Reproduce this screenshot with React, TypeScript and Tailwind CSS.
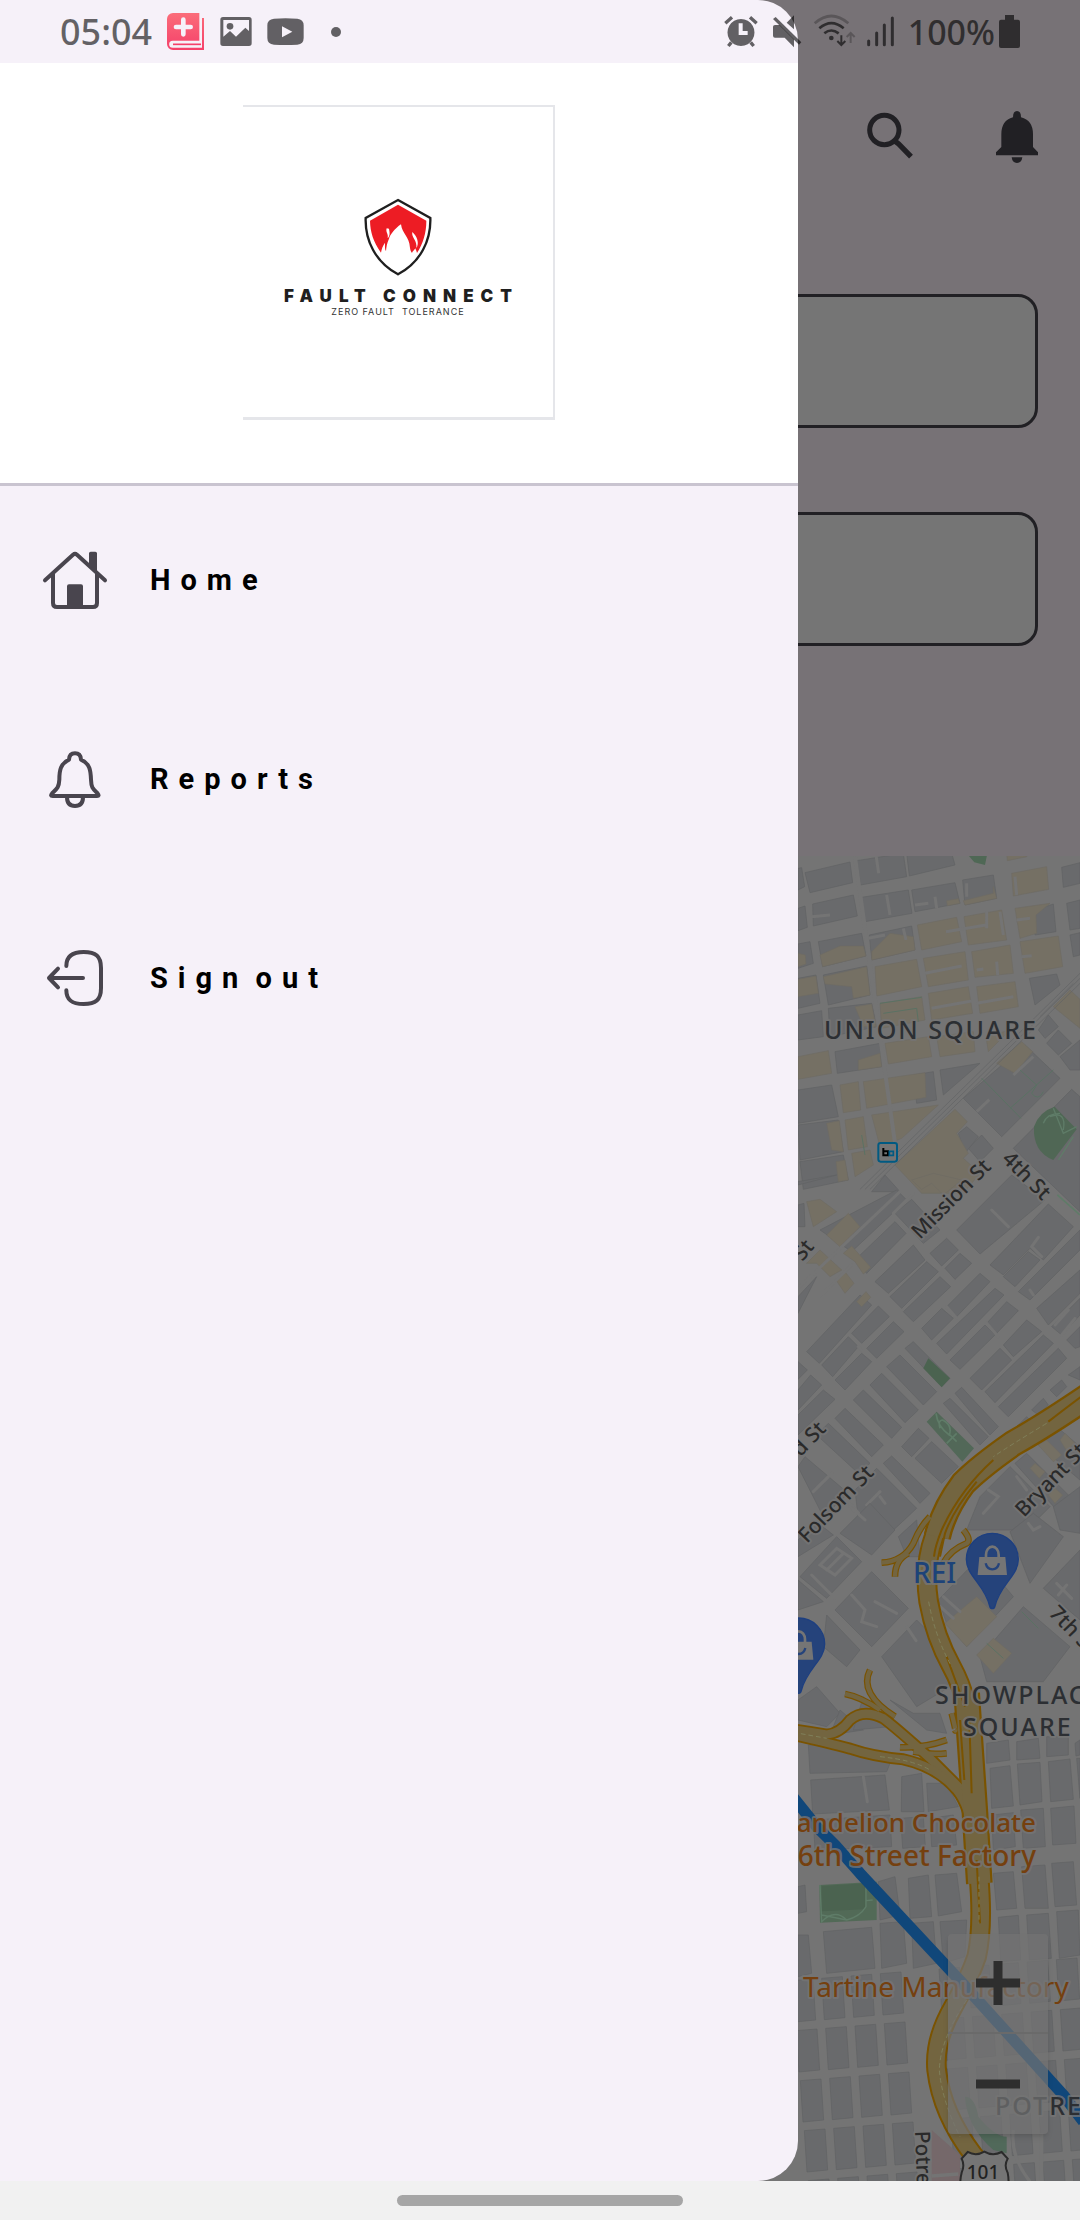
import React from "react";

/* ---------- Status bar ---------- */

function StatusBar() {
  return (
    <div className="absolute inset-x-0 top-0 flex h-[63px] items-center pr-[60px] pl-[60px] text-black/60">
      <span className="font-['Noto_Sans',sans-serif] text-[36px] leading-none font-medium">05:04</span>
      <svg className="ml-[15px] h-[37px] w-[37px]" viewBox="501 39 111 111" aria-hidden="true">
        <defs>
          <linearGradient id="book" x1="0" y1="0" x2="0" y2="1">
            <stop offset="0" stopColor="#fb6d7a" />
            <stop offset="1" stopColor="#f5406a" />
          </linearGradient>
        </defs>
        <path
          fill="url(#book)"
          d="M519 39h79v83h-80a10.500 10.500 0 0 0 0 21h88V54h6v96H519a18 18 0 0 1-18-18V57a18 18 0 0 1 18-18z"
        />
        <path stroke="#f5406a" strokeWidth="5" d="M519 133h84" />
        <path stroke="#f6f1f9" strokeWidth="14" strokeLinecap="round" d="M550 59v44M528 81h44" />
      </svg>
      <svg className="ml-4 h-[29px] w-[32px] fill-current" viewBox="660 51 96 87" aria-hidden="true">
        <path
          fillRule="evenodd"
          d="M669 51h78a8 8 0 0 1 8 8v71a8 8 0 0 1-8 8h-78a8 8 0 0 1-8-8V59a8 8 0 0 1 8-8zM670 60v50l20-17 18 17 28-27 11 10V60z"
        />
        <circle cx="690" cy="79" r="10" />
      </svg>
      <svg className="ml-[15px] h-[27px] w-[37px] fill-current" viewBox="801 54 111 81" aria-hidden="true">
        <path
          fillRule="evenodd"
          d="M822 56q34-3 70 0 19 2 19 20v38q0 18-19 20-36 2-70 0-20-2-20-20V76q0-18 20-20zM846 79v33l31-17z"
        />
      </svg>
      <span className="ml-[27px] h-[10px] w-[10px] rounded-full bg-current" />

      <svg className="ml-auto h-[33px] w-[34px]" viewBox="132 45 102 99" aria-hidden="true">
        <path
          fill="currentColor"
          fillRule="evenodd"
          d="M183 57a40.500 40.500 0 1 1-.1 0zM176 70v35h27V93h-15V70z"
        />
        <path stroke="currentColor" strokeWidth="10" d="M136 70l20-18M230 70l-20-18M154 127l-9 11M212 127l9 11" />
      </svg>
      <svg className="ml-[14px] h-[33px] w-[30px] fill-current" viewBox="276 45 90 99" aria-hidden="true">
        <path d="M287 51l77 76-7 7-78-77z" />
        <path d="M279 80q0-5 6-5h14l43 43v24l-28-29h-29q-6 0-6-6zM320 68l22-22v42z" />
      </svg>
      <svg className="ml-[11px] h-[33px] w-[43px] overflow-visible" viewBox="399 45 129 99" fill="none" aria-hidden="true">
        <g stroke="currentColor" strokeWidth="8">
          <path strokeOpacity=".4" d="M404 70q50-44 101 0" />
          <path d="M418 85q36-31 73 0M433 100q21-17 43 0" />
          <path d="M484 106v28M472 123l12 12 12-12" strokeWidth="6" />
          <path strokeOpacity=".4" d="M512 129v-30M500 111l12-12 12 12" strokeWidth="6" />
        </g>
        <circle cx="454" cy="114" r="7" fill="currentColor" />
      </svg>
      <svg className="ml-[10px] h-[33px] w-[29px]" viewBox="558 45 87 99" aria-hidden="true">
        <path
          stroke="currentColor"
          strokeWidth="9"
          strokeLinecap="round"
          d="M566 123v11M590 99v35M613 75v59M637 54v80"
        />
      </svg>
      <span className="ml-[13px] font-['Noto_Sans',sans-serif] text-[34px] leading-none font-medium">100%</span>
      <svg className="ml-1 h-[33px] w-[21px] fill-current" viewBox="957 45 63 99" aria-hidden="true">
        <path d="M975 45h27v14h12q6 0 6 6v73q0 6-6 6h-51q-6 0-6-6V65q0-6 6-6h12z" />
      </svg>
    </div>
  );
}

/* ---------- Map ---------- */

const DOWNTOWN_GREY = [
  "54,85 65,83 74,140 54,150",
  "75,98 210,66 218,128 90,158",
  "230,62 370,40 380,110 242,135",
  "380,40 515,40 525,75 388,108",
  "845,82 900,68 900,130 850,142",
  "54,205 75,198 82,262 54,272",
  "98,192 220,165 232,228 100,258",
  "245,172 385,150 396,220 255,245",
  "395,150 525,128 540,190 405,215",
  "548,120 640,105 650,175 555,195",
  "54,312 90,305 100,370 54,385",
  "115,305 245,280 258,348 128,380",
  "268,285 395,258 405,330 275,360",
  "755,215 820,192 828,275 765,285",
  "860,190 900,180 900,265 870,270",
  "870,285 900,278 900,345 880,350",
  "54,415 108,405 120,490 54,505",
  "130,405 260,378 270,465 145,495",
  "748,415 830,402 840,435 765,495",
  "54,525 125,512 130,590 54,600",
  "145,505 275,490 290,560 150,590",
  "165,635 300,610 305,680 172,700",
  "54,750 155,735 175,830 54,850",
  "400,705 460,695 470,780 410,790",
  "480,690 600,670 490,765",
  "54,855 175,840 190,935 60,960",
  "60,965 190,945 205,1020 70,1048",
];

const DOWNTOWN_TAN = [
  "680,40 742,40 740,50 682,62",
  "695,100 800,80 806,148 700,168",
  "500,182 535,176 540,190 502,197",
  "550,182 640,160 640,140 650,175 555,195",
  "705,205 810,190 768,225 770,280 720,295",
  "120,345 180,318 250,318 258,348 128,380",
  "275,335 330,280 400,290 405,330 275,360",
  "412,255 530,232 545,305 425,330",
  "552,230 665,210 680,300 565,315",
  "54,340 76,345 78,372 54,380",
  "54,418 108,408 115,460 54,470",
  "130,410 260,380 270,465 220,475 215,440 135,432",
  "285,380 410,358 425,440 290,468",
  "430,355 555,335 565,420 445,440",
  "575,335 690,315 700,400 585,412",
  "720,305 835,288 848,380 735,400",
  "225,500 275,492 288,560 250,560",
  "300,490 425,470 435,540 305,565",
  "445,460 565,440 578,520 455,540",
  "590,440 705,425 715,500 600,520",
  "54,650 145,632 155,700 54,718",
  "235,660 300,640 305,680 235,690",
  "315,610 445,590 455,650 325,672",
  "470,590 580,575 585,635 480,650",
  "618,590 690,570 625,635",
  "180,735 235,725 242,810 190,818",
  "250,725 435,698 438,772 260,805",
  "140,850 178,842 190,935 155,930",
  "195,840 250,830 262,920 205,930",
  "275,825 475,795 365,895 300,920",
  "168,965 195,960 205,1020 175,1025",
  "215,940 270,930 280,975 225,1010",
];

const MARKET_GREY = [
  "605,885 640,925 600,965 565,925",
  "550,775 735,615 840,715 665,890",
  "775,570 805,525 835,560 795,595",
  "835,570 875,610 835,645 800,610",
  "840,650 900,600 900,690 870,690",
  "535,880 560,860 595,890 555,940",
  "700,925 875,748 900,770 900,1115",
  "275,1055 315,1005 360,1055",
];

const MARKET_TAN = [
  "345,975 525,808 562,845 530,880 565,940 550,955 600,1000 550,1060 425,1060",
  "650,670 725,605 758,635 705,700",
  "820,500 870,450 900,478 900,565",
];

const SOMA_GREY = [
  "54,5 170,-15 54,15",
  "54,75 72,70 75,140 54,140",
  "120,150 350,30 380,60 215,215",
  "225,240 345,125 378,160 260,280",
  "285,305 400,195 435,240 325,340",
  "330,350 440,245 475,275 365,385",
  "370,395 480,290 512,320 400,425",
  "345,100 395,58 480,150 430,190",
  "450,220 500,175 535,210 485,258",
  "495,265 540,220 575,250 525,298",
  "425,445 485,385 520,415 455,480",
  "500,380 600,280 630,305 530,410",
  "470,490 645,325 672,345 500,522",
  "530,150 695,-15 795,60 600,222",
  "630,255 805,72 880,140 790,240 750,205 670,285",
  "670,290 745,215 780,240 705,320",
  "715,335 900,150 900,210 750,360",
  "770,385 900,270 900,340 805,435",
  "815,440 900,355 900,405 845,465",
  "860,480 900,440 900,500 885,505",
  "620,430 680,365 715,392 650,460",
  "510,540 615,435 645,465 540,568",
  "670,495 740,420 785,455 700,530",
  "570,595 660,505 695,540 605,630",
  "615,635 790,465 820,490 645,668",
  "655,680 835,505 860,535 685,710",
  "54,350 110,290 54,400",
  "80,515 240,345 275,375 118,550",
  "215,460 295,378 328,410 245,490",
  "260,505 340,425 372,455 290,535",
  "125,555 205,470 235,500 158,590",
  "165,600 245,520 275,545 195,630",
  "54,545 82,570 54,598",
  "54,630 92,585 125,615 54,690",
  "54,705 130,630 165,658 54,765",
  "375,505 400,485 510,595 485,620",
  "320,560 360,525 470,635 430,675",
  "270,615 305,580 415,690 375,728",
  "220,660 250,630 365,742 335,775",
  "165,715 195,685 310,795 275,830",
  "110,765 145,730 270,850 235,880",
  "490,670 510,655 625,770 600,795",
  "525,640 545,622 655,740 630,765",
  "365,800 415,745 447,775 395,830",
  "405,835 455,785 535,860 485,910",
  "310,850 335,828 450,940 420,970",
  "54,860 75,830 205,940 130,1010",
  "225,930 290,865 410,985 330,1060 240,1060",
  "710,740 740,710 760,730 730,760",
  "755,690 790,655 805,675 775,705",
  "810,630 845,600 860,620 830,650",
  "865,585 900,560 900,600",
  "600,950 690,860 810,980 740,1050 560,1050",
  "705,850 740,820 870,950 830,990",
  "770,790 830,740 900,800 900,900",
];

const SOMA_TAN = [
  "80,65 120,58 170,95 100,140",
  "140,165 205,100 240,140 180,200",
  "395,0 460,-20 545,0 490,45 455,10 425,28",
  "190,220 215,198 272,262 250,282 225,245",
  "80,250 120,210 185,270 150,290 110,250",
  "168,300 195,275 222,310 195,340",
  "230,365 258,335 272,352 245,380",
  "750,865 765,850 795,875 778,895",
  "775,795 800,780 845,825 820,845",
  "840,780 855,760 885,790 860,812",
  "805,945 825,925 848,945 825,970",
];

const DESIGN_GREY = [
  "54,170 54,120 110,65 160,105",
  "60,230 170,110 245,185 140,295",
  "165,330 275,215 385,325 275,440",
  "54,240 130,305 54,330",
  "140,345 240,450 200,500 130,440",
  "180,100 270,10 345,90 275,165",
  "305,470 410,360 480,430 510,560 410,620",
  "54,600 110,560 180,640 140,680 54,660",
  "180,630 250,690 150,705",
  "355,110 410,60 420,170 380,170",
  "475,300 600,170 700,290 560,440 500,370",
  "600,470 730,320 870,440 790,545 620,545",
  "790,265 900,150 900,360",
  "690,95 760,40 850,110 750,250",
  "820,20 900,-40 900,100 840,90",
  "250,590 330,680 220,690",
  "330,600 400,640 480,640 500,700 440,690",
  "85,735 190,725 330,790 320,815 90,820",
  "92,840 315,825 328,930 98,942",
  "365,830 425,820 432,935 364,935",
  "440,850 500,850 535,920 445,935",
  "620,730 685,720 690,780 620,790",
  "710,725 775,715 780,775 710,780",
  "800,710 865,710 865,765 800,770",
  "885,730 900,720 900,765 888,768",
  "630,805 690,797 700,918 635,925",
  "712,792 780,787 786,905 720,915",
  "805,785 870,777 880,898 812,905",
  "890,775 900,775 900,895",
  "100,960 330,945 335,1040 105,1050",
  "362,955 430,950 436,1040 368,1045",
  "450,955 520,945 530,1035 455,1040",
  "635,945 700,938 706,1040 640,1050",
  "722,930 790,925 796,1040 730,1045",
  "812,925 882,918 888,1030 818,1035",
];

const DESIGN_TAN = [
  "495,370 590,290 650,350 560,440",
  "590,465 640,415 695,460 640,520",
];

const POTRERO_GREY = [
  "54,140 75,135 80,215 54,220",
  "295,125 345,110 360,225 300,240",
  "385,115 445,105 455,230 390,235",
  "465,105 530,100 545,215 475,228",
  "640,100 700,95 710,205 650,210",
  "725,80 795,75 805,205 735,205",
  "815,70 880,65 890,195 825,200",
  "54,285 85,285 95,400 54,410",
  "130,275 275,262 285,385 140,400",
  "300,250 370,245 380,370 305,385",
  "395,250 460,245 470,370 400,385",
  "480,245 560,240 555,350 490,370",
  "655,232 715,226 722,360 662,365",
  "740,225 805,220 814,355 748,360",
  "830,215 895,210 900,345 838,355",
];

function southernBlocks(): string[] {
  const list: string[] = [];
  for (let row = 0; row < 5; row++) {
    for (let col = -1; col < 10; col++) {
      const x = 125 + col * 88 + row * 12;
      const y = 415 + row * 150 - col * 7;
      if (x > 350 + row * 14 && x < 400 + row * 14) continue;
      list.push(`${x},${y} ${x + 62},${y - 5} ${x + 70},${y + 118} ${x + 8},${y + 124}`);
    }
  }
  return list;
}

function Blocks({ list, tan = false }: { list: string[]; tan?: boolean }) {
  return (
    <g fill={tan ? "#757064" : "#696a6c"} stroke={tan ? "#6e6b64" : "#616264"} strokeWidth="2">
      {list.map((points) => (
        <polygon key={points} points={points} />
      ))}
    </g>
  );
}

const FREEWAY =
  "M930 1665Q790 1760 700 1810Q600 1880 550 1930Q480 2020 462 2090Q430 2180 446 2285Q465 2390 515 2480Q570 2580 570 2700L580 2880L597 3110Q610 3260 590 3350Q570 3410 520 3500Q462 3600 470 3690Q485 3820 580 3945L680 4060";
const FREEWAY_NORTH = "M930 1665Q790 1760 700 1810Q600 1880 550 1930Q490 2010 472 2090";
const FREEWAY_SOUTH = "M560 2560L585 2920L598 3130";
const CONNECTORS = [
  "M40 2668Q90 2675 140 2684Q180 2680 210 2640Q250 2605 310 2635Q350 2665 450 2755L570 2875",
  "M40 2685Q150 2710 210 2726Q280 2750 370 2758Q470 2780 530 2850Q570 2900 578 2990",
];
const RAMPS = [
  "M270 2490Q235 2560 345 2630",
  "M195 2562Q240 2570 300 2610",
  "M305 2168Q370 2165 400 2110Q420 2060 450 2030",
  "M345 2210Q345 2160 385 2140",
  "M490 2170Q510 2130 560 2110Q575 2100 550 2070",
  "M360 2722Q430 2725 500 2700",
  "M400 2735Q450 2745 500 2740",
  "M515 2620Q530 2680 525 2670",
];

function Pin({ x, y }: { x: number; y: number }) {
  return (
    <g transform={`translate(${x} ${y})`}>
      <path fill="#25437b" stroke="#1d3f80" strokeWidth="4" d="M0-78a78 78 0 0 1 78 78c0 50-55 75-70 140q-2 8-8 8t-8-8C-23 75-78 50-78 0a78 78 0 0 1 78-78z" />
      <path fill="#757575" d="M-39-7h78l5 54h-88z" />
      <path fill="none" stroke="#757575" strokeWidth="8" d="M-19-6v-8a19 24 0 0 1 38 0v8" />
      <path fill="none" stroke="#25437b" strokeWidth="7" d="M-20 12q4 18 20 18t20-18" />
    </g>
  );
}

function CityMap() {
  return (
    <svg
      className="absolute inset-0 h-full w-full"
      viewBox="0 856 1080 1325"
      preserveAspectRatio="xMaxYMin slice"
      role="img"
      aria-label="Map of San Francisco"
    >
      <rect x="0" y="856" width="1080" height="1325" fill="#747474" />
      <g transform="translate(780 840) scale(0.33333)">
        <Blocks list={DOWNTOWN_GREY} />
        <Blocks list={DOWNTOWN_TAN} tan />
        <Blocks list={MARKET_GREY} />
        <Blocks list={MARKET_TAN} tan />
        <g fill="none" stroke="#747474" strokeWidth="9">
          <path d="M288 45l8 55M320 165l10 60M95 230l55-5M498 275l120-20M620 215v50M435 400l110-22M455 505l120-22M590 490l110-20M405 195l40-5M465 170l5 35M560 130v40M710 240l40-5M725 350l30-3M650 365l3 40M590 390l20-3M705 110l5 55M660 215l10 70M590 815l38-36M700 705l60-55M265 295l50-10M370 265l8 35" />
          <path d="M225 50l120 860" strokeWidth="12" />
        </g>
        <g fill="none" stroke="#626365" strokeWidth="2">
          <path d="M900 400L240 1048M900 415L255 1048M900 430L270 1048M780 530L880 430" />
        </g>
        <g fill="none" stroke="#5a7163" strokeWidth="3">
          <path d="M605 715l118 120M690 805l130-115M720 690l50 45-15 25q20 25 35-5M300 490l125-18M310 520l100-15 5 40M245 885l10 60" />
        </g>
        <path fill="#4f6855" d="M560 40h62l-7 35-32-8z" />
        <path fill="#506755" d="M762 860q15-45 62-60l66 68-70 92q-62-25-58-100z" />
        <path fill="none" stroke="#5f7c68" strokeWidth="4" d="M820 805l30 75 40-20M810 830q50-20 40 40M835 960l45-70M790 850q10-30 50-30" />

        <g transform="translate(0 1020)">
          <Blocks list={SOMA_GREY} />
          <Blocks list={SOMA_TAN} tan />
          <g fill="none" stroke="#747474" strokeWidth="9" strokeLinecap="round">
            <path d="M54 325L360 35M120 348L215 255M635 90l50 50M340 100l60-60M500 380l30 35M620 430l35 40M755 200l30 30M755 200l20-28M750 330l10 15M825 435l40-45M845 465l40-50M235 500l15 15M100 935l55-55M260 975l40-40M300 950l15 20M625 930l30 20-45 50M710 890l30 40M200 960l55 60" />
          </g>
          <path fill="#4b6350" d="M430 565l15-30 65 60-25 27z" />
          <path fill="#526858" d="M440 725l30-30 112 110-35 40z" />
          <path fill="none" stroke="#5f7c68" strokeWidth="5" d="M468 700q5 40 40 65 10-30-20-45-15 0-8 25M500 790l30-30M510 765l20 20M832 45l68 60" />
        </g>

        <g transform="translate(0 1980)">
          <Blocks list={DESIGN_GREY} />
          <Blocks list={DESIGN_TAN} tan />
          <g fill="none" stroke="#747474" strokeWidth="9" strokeLinecap="round">
            <path d="M215 285l40 45-10 35 45 15M285 305l65 35M380 380l28 42M120 195l50-50 45 30-50 50zM140 210l50-50M95 225l70 70M490 290l50 45M470 310l50 45M830 250l45 45M835 285l25-30M250 830l12 75M745 70l15 20 20-10M210 20l45 40" />
          </g>
          <path fill="none" stroke="#5a7163" strokeWidth="3" d="M725 335l50 50M620 430l50 45" />
        </g>

        <g transform="translate(0 3000)">
          <Blocks list={POTRERO_GREY} />
          <Blocks list={southernBlocks()} />
          <path fill="#526a57" d="M118 135l172-10v115l-170 8z" />
          <path fill="#4b6350" d="M125 138l130-8v78l-130 6z" />
          <path fill="none" stroke="#5f7c68" strokeWidth="4" d="M120 135l5 110q40-40 75-5 40-10 58-40v-75M258 182l20-2M125 225l75 15" />
          <path fill="#51695a" d="M555 770q30 0 40 60 50 60 85 60v50l-40-10q-80-70-85-160z" />
          <path fill="#75686a" d="M455 870l85 75v80h-85z" />
          <path fill="none" stroke="#747474" strokeWidth="10" d="M455 1008l80-6M700 870q-10 80 50 155M785 880v145" />
        </g>

        <g fill="none" stroke="#7a5300" strokeLinejoin="round">
          <g strokeWidth="20">
            {RAMPS.map((d) => (
              <path key={d} d={d} />
            ))}
          </g>
          <g strokeWidth="36">
            {CONNECTORS.map((d) => (
              <path key={d} d={d} />
            ))}
          </g>
          <path strokeWidth="62" d={FREEWAY} />
          <path strokeWidth="82" d={FREEWAY_NORTH} />
          <path strokeWidth="80" d={FREEWAY_SOUTH} />
        </g>
        <g fill="none" stroke="#736540" strokeLinejoin="round">
          <g strokeWidth="13">
            {RAMPS.map((d) => (
              <path key={d} d={d} />
            ))}
          </g>
          <g strokeWidth="25">
            {CONNECTORS.map((d) => (
              <path key={d} d={d} />
            ))}
          </g>
          <path strokeWidth="50" d={FREEWAY} />
          <path strokeWidth="68" d={FREEWAY_NORTH} />
          <path strokeWidth="67" d={FREEWAY_SOUTH} />
        </g>
        <g fill="none" stroke="#7a5300" strokeWidth="6">
          <path d="M930 1650Q850 1710 805 1745M640 1860Q540 1950 485 2070Q465 2120 462 2150M590 1925Q520 2010 495 2080L480 2150M500 2450L555 2600M568 2640L575 2860M540 2640L553 2820M590 3060L600 3250" />
        </g>
        <path
          fill="none"
          stroke="#80805a"
          strokeWidth="3"
          strokeDasharray="14 9"
          d="M800 1750Q700 1810 640 1850M446 2285Q465 2390 515 2480M40 2677L140 2695M300 2750Q400 2760 450 2790M597 3110V3250M560 3480Q480 3600 478 3690Q485 3780 540 3890"
        />

        <path fill="none" stroke="#10477a" strokeWidth="34" strokeLinejoin="bevel" d="M30 2860L110 2960L165 3015L240 3100L540 3422L850 3765L910 3845" />
        <Pin x={637} y={2158} />
        <Pin x={56} y={2412} />

        <rect x="295" y="909" width="56" height="56" rx="7" fill="#747474" stroke="#005a82" strokeWidth="6" />
        <path fill="none" stroke="#000" strokeWidth="6" d="M310 924v22h14v-12h-14" />
        <path fill="none" stroke="#005a82" strokeWidth="5" d="M328 934h12v12h-12z" />
      </g>

      <g
        fontFamily="'Noto Sans', sans-serif"
        fontWeight="500"
        stroke="#757575"
        strokeWidth="4"
        strokeOpacity=".8"
        strokeLinejoin="round"
        paintOrder="stroke"
      >
        <g fill="#2c2f33" fontSize="25" letterSpacing="2">
          <text x="824" y="1039">UNION SQUARE</text>
          <text x="935" y="1704">SHOWPLACE</text>
          <text x="963" y="1736">SQUARE</text>
          <text x="995" y="2115">POTRERO</text>
        </g>
        <g fill="#2a2a2a" fontSize="21">
          <text transform="translate(920 1240) rotate(-45)">Mission St</text>
          <text transform="translate(1001 1160) rotate(45)">4th St</text>
          <text textAnchor="end" transform="translate(815 1247) rotate(-50)">St</text>
          <text textAnchor="end" transform="translate(827 1430) rotate(-46)">d St</text>
          <text transform="translate(807 1544) rotate(-46)">Folsom St</text>
          <text transform="translate(1024 1518) rotate(-46)">Bryant St</text>
          <text transform="translate(1048 1614) rotate(46)">7th St</text>
          <text transform="translate(915 2131) rotate(88)">Potrero</text>
        </g>
        <text x="913" y="1583" fontSize="28" fill="#1d4379">REI</text>
        <g fill="#75400f" fontSize="28">
          <text x="1036" y="1832" textAnchor="end" fontSize="26">Dandelion Chocolate</text>
          <text x="1036" y="1866" textAnchor="end">16th Street Factory</text>
          <text x="803" y="1997" fontWeight="400">Tartine Manufactory</text>
        </g>
      </g>
      <path
        transform="translate(780 1840) scale(0.33333)"
        fill="#757575"
        stroke="#2b2b2b"
        strokeWidth="6"
        d="M563 936q25 14 50-1 25 15 52 1l18 20q-12 20 0 42 6 30-2 60H545q-8-30 0-60 10-22 0-42z"
      />
      <text x="983" y="2179" textAnchor="middle" fontFamily="'Noto Sans', sans-serif" fontSize="19" fontWeight="500" fill="#222">
        101
      </text>
    </svg>
  );
}

function ZoomControls() {
  return (
    <div className="absolute right-8 bottom-[47px] flex w-[100px] flex-col overflow-hidden rounded-sm bg-[#747474]/70 shadow-md">
      <button type="button" aria-label="Zoom in" className="flex h-[100px] items-center justify-center border-b-2 border-[#6a6a6a]">
        <svg className="h-11 w-11" viewBox="0 0 44 44">
          <path d="M22 0v44M0 22h44" stroke="#2e2e2e" strokeWidth="9" />
        </svg>
      </button>
      <button type="button" aria-label="Zoom out" className="flex h-[100px] items-center justify-center">
        <svg className="h-11 w-11" viewBox="0 0 44 44">
          <path d="M0 22h44" stroke="#2e2e2e" strokeWidth="9" />
        </svg>
      </button>
    </div>
  );
}

/* ---------- Page behind the drawer ---------- */

function HomePage() {
  return (
    <main className="flex flex-1 flex-col bg-[#777276]">
      <header className="flex h-[211px] items-center justify-end gap-[67px] pt-[63px] pr-[33px]">
        <button type="button" aria-label="Search" className="h-[60px] w-[60px]">
          <svg className="h-full w-full" viewBox="540 321 180 180" fill="none" stroke="#212024">
            <circle cx="613" cy="390" r="44" strokeWidth="15" />
            <path strokeWidth="16" d="M646 424l10 8 37 38" />
          </svg>
        </button>
        <button type="button" aria-label="Notifications" className="h-[60px] w-[60px]">
          <svg className="h-full w-full" viewBox="921 321 180 180" fill="#212024">
            <path d="M1011 333q12 0 12 19 36 9 36 51v38l15 16v9H948v-9l16-16v-38q0-42 35-51 0-19 12-19zM995 472h32q-2 17-16 17t-16-17z" />
          </svg>
        </button>
      </header>
      <form className="mt-[83px] flex flex-col gap-[84px] px-[42px]">
        <input aria-label="Location" className="h-[134px] w-full rounded-[20px] border-3 border-[#212024] bg-[#757575] px-6" />
        <input aria-label="Fault" className="h-[134px] w-full rounded-[20px] border-3 border-[#212024] bg-[#757575] px-6" />
      </form>
      <section className="relative mt-[210px] min-h-[600px] flex-1 overflow-hidden">
        <CityMap />
        <ZoomControls />
      </section>
    </main>
  );
}

/* ---------- Drawer ---------- */

function Logo() {
  return (
    <div className="flex h-[315px] w-[312px] flex-col items-center border-t-2 border-r-2 border-b-3 border-[#e5e6ea] pt-[91px]">
      <svg className="h-[78px] w-[68px] shrink-0" viewBox="281 24 204 234" aria-hidden="true">
        <path
          fill="#fff"
          stroke="#1f1f1f"
          strokeWidth="7"
          d="M383 30l97 54c2 66-28 132-97 169-69-37-99-103-97-169z"
        />
        <path
          fill="#ed1c24"
          d="M383 44l85 48c0 38-10 68-28 97-2-8-4-10-5-14-3 6-9 9-10 14-4-5-5-10-6-15-2-36-24-42-27-71-18 12-33 32-36 43-6 14-8 24-9 38-4-8-3-14-3-26-6 8-10 18-12 30-24-35-32-62-33-96z"
        />
        <path fill="#fff" d="M349 115c-4 12 6 16 3 30 8-9 6-17 4-29zM426 126c-4 16 16 26 12 48 10-14 2-36-12-48z" />
      </svg>
      <p className="mt-3 pl-[7px] font-['Inter',sans-serif] text-[17px] leading-4 font-black tracking-[7px] whitespace-nowrap text-[#1f1f1f]">
        FAULT CONNECT
      </p>
      <p className="mt-0.5 font-['Inter',sans-serif] text-[9px] leading-3 tracking-[1px] whitespace-pre text-[#333]">
        {"ZERO FAULT  TOLERANCE"}
      </p>
    </div>
  );
}

const ICON_CLASS = "h-[72px] w-[72px] shrink-0";

function HomeIcon() {
  return (
    <svg className={ICON_CLASS} viewBox="117 72 216 216" fill="none" stroke="#49454e" strokeWidth="12" strokeLinecap="round" strokeLinejoin="round" aria-hidden="true">
      <path d="M135 181l84-77q6-5 12 0l84 77M159 162v87q0 12 12 12h108q12 0 12-12v-87" />
      <path fill="#49454e" stroke="none" d="M267 100q0-5 5-5h14q5 0 5 5v57l-24-21zM201 199q0-6 6-6h36q6 0 6 6v64h-48z" />
    </svg>
  );
}

function BellIcon() {
  return (
    <svg className={ICON_CLASS} viewBox="117 668 216 216" fill="none" stroke="#49454e" strokeWidth="12" strokeLinejoin="round" aria-hidden="true">
      <path d="M207 718q1-19 18-19t18 19c27 12 29 32 30 60 1 25 5 27 19 40 6 7 4 9-1 9H158c-5 0-7-2-1-9 14-13 20-17 21-40 0-30 4-48 29-60zM201 830q0 27 24 27t24-27" />
    </svg>
  );
}

function SignOutIcon() {
  return (
    <svg className={ICON_CLASS} viewBox="117 1266 216 216" fill="none" stroke="#49454e" strokeWidth="12" strokeLinecap="round" strokeLinejoin="round" aria-hidden="true">
      <path d="M199 1338c0-30 20-42 52-42 36 0 52 12 52 48v60c0 36-16 48-52 48-32 0-52-10-52-41M249 1374H149M174 1346l-27 28 27 28" />
    </svg>
  );
}

const MENU = [
  { words: ["Home"], Icon: HomeIcon },
  { words: ["Reports"], Icon: BellIcon },
  { words: ["Sign", "out"], Icon: SignOutIcon },
];

function Drawer() {
  return (
    <aside className="absolute inset-y-0 left-0 w-[798px] max-w-[90%] overflow-hidden rounded-r-[40px] bg-[#f6f1f9] pt-[63px]">
      <div className="flex h-[423px] justify-center border-b-3 border-[#c9c4d0] bg-white pt-[42px]">
        <Logo />
      </div>
      <nav aria-label="Main">
        <ul className="flex flex-col gap-[72px] pt-[30px]">
          {MENU.map(({ words, Icon }) => (
            <li key={words[0]}>
              <a href="#" className="flex h-[127px] items-center gap-[39px] pl-[39px]">
                <Icon />
                <span className="font-['Roboto',sans-serif] text-[29px] leading-9 font-bold tracking-[10px] text-black">
                  {words.map((word, i) => (
                    <React.Fragment key={word}>
                      {i > 0 && <span className="tracking-normal"> </span>}
                      {word}
                    </React.Fragment>
                  ))}
                </span>
              </a>
            </li>
          ))}
        </ul>
      </nav>
    </aside>
  );
}

export default function App() {
  return (
    <div className="flex min-h-screen flex-col bg-[#f1f1f1]">
      <div className="relative flex flex-1 flex-col">
        <HomePage />
        <Drawer />
        <StatusBar />
      </div>
      <footer className="flex h-[39px] items-center justify-center">
        <span className="h-[11px] w-[286px] rounded-full bg-[#a6a6a6]" />
      </footer>
    </div>
  );
}
